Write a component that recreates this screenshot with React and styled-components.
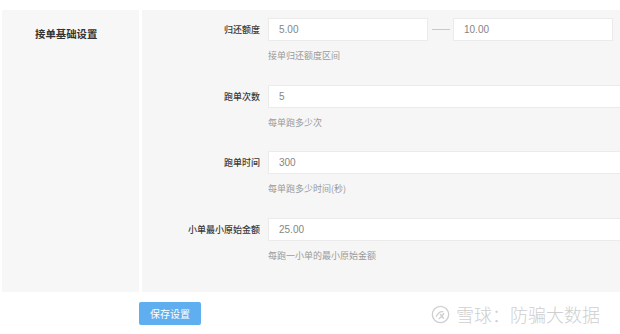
import React from 'react';
import styled, { createGlobalStyle } from 'styled-components';

const GlobalStyle = createGlobalStyle`
  html, body {
    margin: 0;
    padding: 0;
    background: #fff;
    overflow: hidden;
  }
  body {
    font-family: "Noto Sans CJK SC", "Liberation Sans", sans-serif;
  }
`;

const Page = styled.div`
  position: relative;
  width: 620px;
  height: 334px;
  padding-top: 10px;
  box-sizing: border-box;
`;

const Panel = styled.div`
  display: flex;
  margin-left: 2px;
  height: 282px;
  gap: 3px;
`;

const Side = styled.div`
  width: 137px;
  flex: none;
  background: #f7f7f7;
  padding: 17px 0 0 33px;
  box-sizing: border-box;
`;

const SideTitle = styled.div`
  font-size: 10.4px;
  line-height: 14px;
  font-weight: 700;
  color: #333;
`;

const Main = styled.div`
  flex: 1;
  background: #f6f6f6;
  padding-top: 8px;
  overflow: hidden;
`;

const FormItem = styled.div`
  height: 66.7px;
`;

const Row = styled.div`
  display: flex;
  align-items: center;
  height: 23px;
`;

const Label = styled.div`
  width: 118px;
  flex: none;
  margin-right: 8px;
  text-align: right;
  font-size: 9px;
  font-weight: 500;
  color: #3a3a3a;
  white-space: nowrap;
`;

const Input = styled.div`
  width: ${p => p.$w}px;
  flex: none;
  height: 23px;
  box-sizing: border-box;
  background: #fff;
  border: 1px solid #ebebeb;
  padding-left: 10px;
  display: flex;
  align-items: center;
  font-size: 10px;
  color: #858585;
  font-family: "Liberation Sans", "Noto Sans CJK SC", sans-serif;
`;

const Dash = styled.div`
  width: 18px;
  height: 1px;
  background: #c8c8c8;
  margin: 0 3px 0 4px;
`;

const Help = styled.div`
  margin: 9px 0 0 126px;
  font-size: 9px;
  line-height: 12px;
  color: #9a9a9a;
`;

const Footer = styled.div`
  padding: 7px 0 0 139px;
`;

const SaveButton = styled.button`
  width: 62px;
  height: 23px;
  border: none;
  border-radius: 2px;
  background: #5eaef0;
  color: #fff;
  font-size: 10px;
  font-family: "Noto Sans CJK SC", sans-serif;
  padding: 0;
`;

const Watermark = styled.div`
  position: absolute;
  left: 431px;
  top: 304px;
  display: flex;
  align-items: center;
  gap: 6px;
  color: #cfcfcf;
  font-size: 18px;
  font-weight: 300;
  line-height: 20px;
  white-space: nowrap;
`;

const Logo = () => (
  <svg width="19" height="19" viewBox="0 0 20 20" fill="none" stroke="#cfcfcf" strokeWidth="1.4">
    <circle cx="10" cy="10" r="8.6" />
    <path d="M5.5 12.5c1.5-4 4-6 7.5-5.5" />
    <path d="M8 14.5c2.5-1 4.5-3 5.5-6" />
    <path d="M9.5 9.5l4 5" />
  </svg>
);

const items = [
  { label: '跑单次数', value: '5', help: '每单跑多少次' },
  { label: '跑单时间', value: '300', help: '每单跑多少时间(秒)' },
  { label: '小单最小原始金额', value: '25.00', help: '每跑一小单的最小原始金额' },
];

export default function App() {
  return (
    <>
      <GlobalStyle />
      <Page>
        <Panel>
          <Side>
            <SideTitle>接单基础设置</SideTitle>
          </Side>
          <Main>
            <FormItem>
              <Row>
                <Label>归还额度</Label>
                <Input $w={160}>5.00</Input>
                <Dash />
                <Input $w={160}>10.00</Input>
              </Row>
              <Help>接单归还额度区间</Help>
            </FormItem>
            {items.map(it => (
              <FormItem key={it.label}>
                <Row>
                  <Label>{it.label}</Label>
                  <Input $w={400}>{it.value}</Input>
                </Row>
                <Help>{it.help}</Help>
              </FormItem>
            ))}
          </Main>
        </Panel>
        <Footer>
          <SaveButton>保存设置</SaveButton>
        </Footer>
        <Watermark>
          <Logo />
          <span>雪球：防骗大数据</span>
        </Watermark>
      </Page>
    </>
  );
}
